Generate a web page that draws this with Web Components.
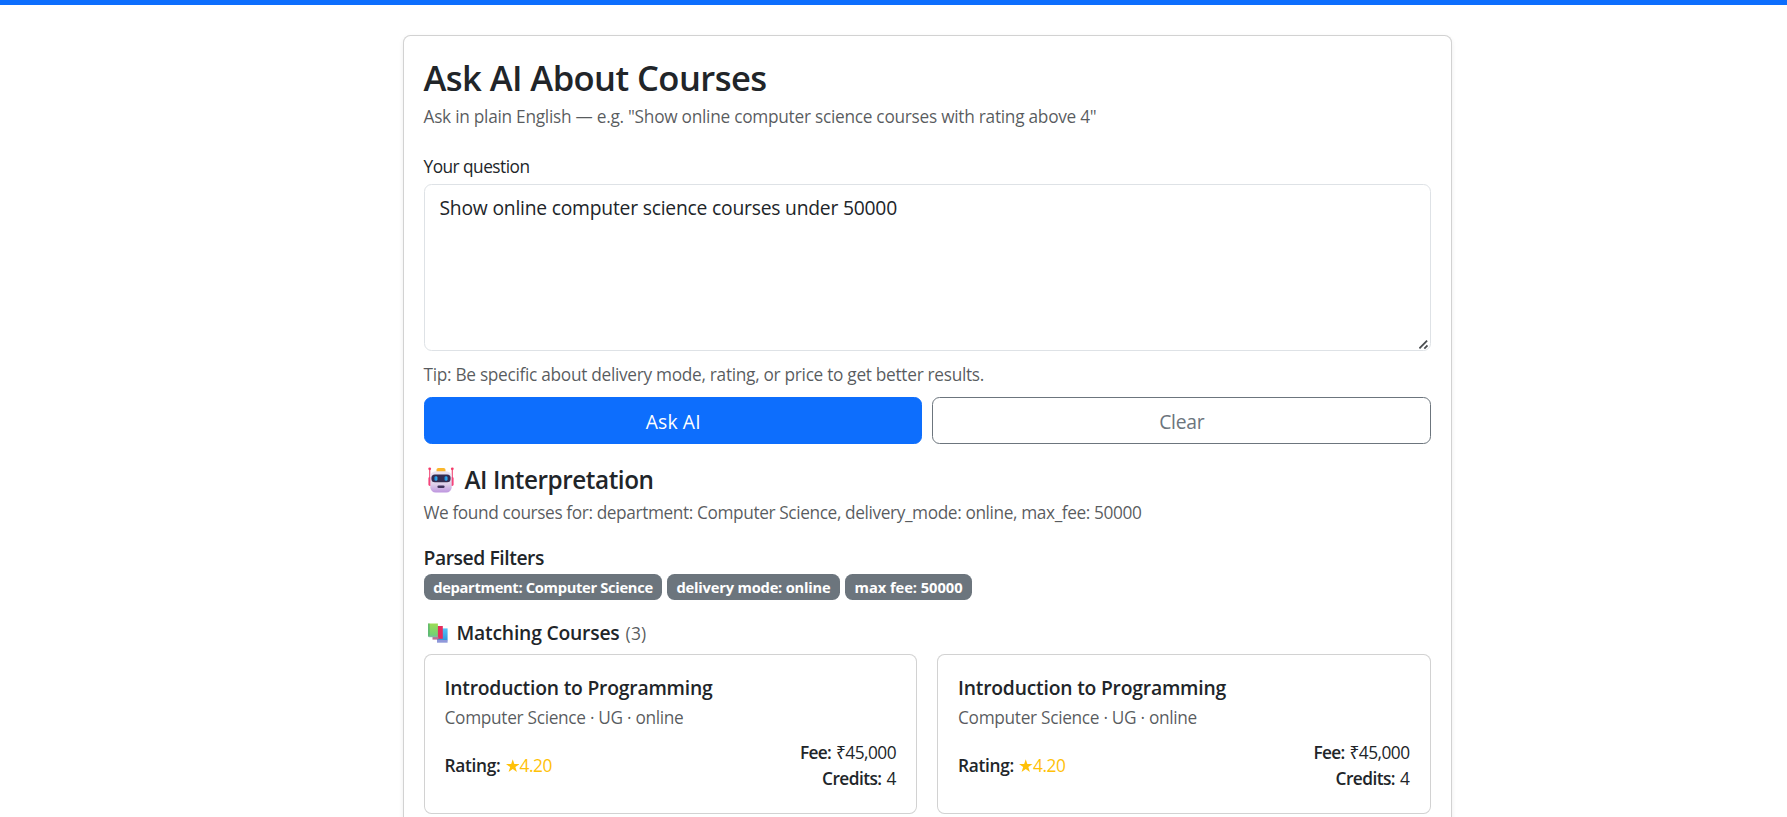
<!DOCTYPE html>
<html lang="en">
<head>
<meta charset="utf-8">
<title>Ask AI About Courses</title>
<style>
html, body { margin: 0; height: 100%; overflow: hidden; background: #fff; }
body { font-family: "Open Sans", "Noto Sans", sans-serif; font-size: 17.3px; color: #212529; }
</style>
</head>
<body>
<course-page></course-page>
<script>
const define = (name, html, ready) => {
  const tpl = document.createElement('template');
  tpl.innerHTML = html;
  customElements.define(name, class extends HTMLElement {
    connectedCallback() {
      if (this.shadowRoot) return;
      this.attachShadow({ mode: 'open' }).append(tpl.content.cloneNode(true));
      if (ready) ready.call(this, this.shadowRoot);
    }
  });
};

// Letter spacing that makes a line of text take the given width.
const spacingFor = (text, font, width) => {
  const ctx = document.createElement('canvas').getContext('2d');
  ctx.font = font;
  return (width - ctx.measureText(text).width) / text.length;
};

// A single line of text; "w" is its width in pixels.
define('text-line', `
<style>
:host { display: block; white-space: nowrap; flex: none; }
:host([muted]) { color: rgba(33,37,41,.75); }
</style><slot></slot>`, function () {
  const w = +this.getAttribute('w');
  if (!w) return;
  const cs = getComputedStyle(this);
  const ls = spacingFor(this.textContent, `${cs.fontWeight} ${cs.fontSize} ${cs.fontFamily}`, w);
  this.style.letterSpacing = ls.toFixed(3) + 'px';
  this.style.width = w + 'px';
});

define('robot-icon', `
<style>:host { display: block; width: 26px; height: 26px; flex: none; } svg { display: block; }</style>
<svg width="26" height="26" viewBox="0 0 26 26">
<defs>
<linearGradient id="f" x1="0" y1="0" x2="0" y2="1"><stop offset="0" stop-color="#ece5f1"/><stop offset=".6" stop-color="#e0d2ea"/><stop offset="1" stop-color="#bd94df"/></linearGradient>
<linearGradient id="e" x1="0" y1="0" x2="1" y2="0"><stop offset="0" stop-color="#1787d8"/><stop offset="1" stop-color="#35b5f5"/></linearGradient>
</defs>
<path d="M1.7 2v13M24.3 2v13" stroke="#f0527c" stroke-width="1.2"/>
<circle cx="1.7" cy="1.8" r="1.4" fill="#f43a68"/><circle cx="24.3" cy="1.8" r="1.4" fill="#f43a68"/>
<rect x=".4" y="10" width="3.4" height="9" rx="1.4" fill="#f5447b"/><rect x="22.2" y="10" width="3.4" height="9" rx="1.4" fill="#f5447b"/>
<rect x="8.5" y="1" width="9" height="5" rx="1.8" fill="#fbb72c"/>
<rect x="2.3" y="4.2" width="21.4" height="21.4" rx="5.4" fill="url(#f)"/>
<rect x="3.4" y="7.4" width="19.2" height="7.8" rx="3.5" fill="#342c50"/>
<rect x="6.4" y="9.3" width="3" height="4.4" rx="1.3" fill="url(#e)"/><rect x="16.5" y="9.3" width="3" height="4.4" rx="1.3" fill="url(#e)"/>
<rect x="9.4" y="18.4" width="7.2" height="2.7" rx="1.3" fill="#40335b"/>
</svg>`);

define('books-icon', `
<style>:host { display: block; width: 20px; height: 20px; flex: none; } svg { display: block; }</style>
<svg width="20" height="20" viewBox="0 0 20 20">
<defs>
<linearGradient id="g" x1="0" y1="0" x2="0" y2="1"><stop offset="0" stop-color="#9bdc55"/><stop offset="1" stop-color="#6fd078"/></linearGradient>
<linearGradient id="b" x1="0" y1="0" x2="0" y2="1"><stop offset="0" stop-color="#52c4f7"/><stop offset="1" stop-color="#3396dd"/></linearGradient>
</defs>
<path d="M9 5.4h10.6v12H9z" fill="url(#b)"/><path d="M9 17h10.6v2.7H9z" fill="#8f98da"/>
<path d="M5 3h9.8v12.8H5z" fill="#e52c5d"/><path d="M4.5 14h6v2.6h-6z" fill="#b77195"/>
<path d="M.3.5h9.6v12.7H.3z" fill="url(#g)"/><path d="M.3.5H1.4v13.2H.3z" fill="#42a866"/><path d="M.8 12.7h9.1v1.5H.8z" fill="#80bda0"/>
</svg>`);

define('question-field', `
<style>
:host { display: block; }
label { display: block; line-height: 27px; }
.box { position: relative; margin-top: 4px; }
textarea { display: block; box-sizing: border-box; width: 100%; height: 167px; margin: 0; padding: 8px 15px 6px; border: 1px solid #dee2e6; border-radius: 7.5px; background: #fff; color: inherit; font: 19.3px/30px "Open Sans", "Noto Sans", sans-serif; resize: none; outline: 0; }
.grip { position: absolute; right: 3px; bottom: 2px; width: 9px; height: 9px; }
text-line[muted] { margin-top: 10px; line-height: 27px; }
</style>
<label for="q"><text-line w="106">Your question</text-line></label>
<div class="box">
<textarea id="q">Show online computer science courses under 50000</textarea>
<svg class="grip" viewBox="0 0 9 9" fill="none" stroke="#4a4d50" stroke-width="1.8"><path d="M.4 8.4 8.1.7M5.3 8.6l3.2-3.2"/></svg>
</div>
<text-line muted w="560.5">Tip: Be specific about delivery mode, rating, or price to get better results.</text-line>
`, root => {
  const box = root.querySelector('textarea');
  box.style.letterSpacing = spacingFor(box.value, '19.3px "Open Sans"', 457.5).toFixed(3) + 'px';
});

define('action-button', `
<style>
:host { display: block; flex: 1; }
button { display: flex; justify-content: center; align-items: center; width: 100%; height: 47px; box-sizing: border-box; margin: 0; padding: 2px 0 0 1px; border: 1px solid #6c757d; border-radius: 7.5px; background: #fff; color: #6c757d; font: 19.3px/30px "Open Sans", "Noto Sans", sans-serif; }
:host([primary]) button { background: #0d6efd; border-color: #0d6efd; color: #fff; }
</style>
<button><slot></slot></button>`);

define('filter-badge', `
<style>
:host { display: flex; justify-content: center; box-sizing: border-box; height: 26px; padding-left: 1px; border-radius: 7.5px; background: #6c757d; color: #fff; font-size: 14.7px; font-weight: 700; line-height: 27px; }
</style><slot></slot>`);

define('course-card', `
<style>
:host { display: block; box-sizing: border-box; height: 160px; padding: 21px 20px; border: 1px solid rgba(0,0,0,.176); border-radius: 7.5px; background: #fff; }
.title { font-size: 19.3px; font-weight: 600; line-height: 24px; }
.sub { margin-top: 4px; line-height: 27px; }
.info { display: flex; justify-content: space-between; align-items: center; margin-top: 9px; line-height: 26px; }
.row { display: flex; justify-content: flex-end; }
.key { font-weight: 600; margin-right: 5px; }
.star { color: #ffc107; display: flex; align-items: center; }
svg { width: 13.5px; height: 13.5px; margin-right: .5px; }
</style>
<text-line class="title" w="268">Introduction to Programming</text-line>
<text-line class="sub" muted w="239">Computer Science · UG · online</text-line>
<div class="info">
<div class="row"><text-line class="key" w="56">Rating:</text-line><span class="star"><svg viewBox="0 0 12 12" fill="currentColor"><path d="M6 .2 7.4 4.5H12L8.3 7.2l1.4 4.4L6 8.9l-3.7 2.7 1.4-4.4L0 4.5h4.6z"/></svg><text-line w="32.5">4.20</text-line></span></div>
<div>
<div class="row"><text-line class="key" w="31">Fee:</text-line><text-line w="60">₹45,000</text-line></div>
<div class="row"><text-line class="key" w="59.5">Credits:</text-line><text-line w="9.5">4</text-line></div>
</div>
</div>`);

define('ask-panel', `
<style>
:host { display: block; box-sizing: border-box; width: 1049px; min-height: 1000px; padding: 20px; border: 1px solid rgba(0,0,0,.176); border-radius: 7.5px; background: #fff; box-shadow: 0 2.5px 5px rgba(0,0,0,.075); }
h1, h2, h3 { margin: 0; font-weight: 600; display: flex; align-items: center; }
h1 { font-size: 34.6px; line-height: 44px; font-weight: 550; }
h2 { font-weight: 550; }
.lead { margin-top: 3px; line-height: 27px; }
question-field { margin-top: 23px; }
.actions { display: flex; gap: 10px; margin-top: 9px; }
h2 { margin-top: 19px; height: 34px; font-size: 24.3px; line-height: 34px; padding-left: 4px; gap: 11px; }
.found { margin-top: 2px; line-height: 27px; }
h3 { font-size: 19.3px; line-height: 24px; }
.parsed { margin-top: 20px; }
.badges { display: flex; gap: 5px; margin-top: 4px; }
.matching { margin-top: 21px; padding-left: 4px; }
.matching books-icon { margin-right: 9px; }
.count { margin-left: 6px; font-size: 17.5px; font-weight: 400; }
.cards { display: grid; grid-template-columns: 1fr 1fr; gap: 20px; margin-top: 9px; }
</style>
<h1><text-line w="343">Ask AI About Courses</text-line></h1>
<text-line class="lead" muted w="673">Ask in plain English — e.g. "Show online computer science courses with rating above 4"</text-line>
<question-field></question-field>
<div class="actions">
<action-button primary><text-line w="55">Ask AI</text-line></action-button>
<action-button><text-line w="45">Clear</text-line></action-button>
</div>
<h2><robot-icon></robot-icon><text-line w="189">AI Interpretation</text-line></h2>
<text-line class="found" muted w="718">We found courses for: department: Computer Science, delivery_mode: online, max_fee: 50000</text-line>
<h3 class="parsed"><text-line w="120.5">Parsed Filters</text-line></h3>
<div class="badges">
<filter-badge style="width:238px"><text-line w="219.5">department: Computer Science</text-line></filter-badge>
<filter-badge style="width:173px"><text-line w="154">delivery mode: online</text-line></filter-badge>
<filter-badge style="width:127px"><text-line w="108">max fee: 50000</text-line></filter-badge>
</div>
<h3 class="matching"><books-icon></books-icon><text-line w="163">Matching Courses</text-line><text-line class="count" muted w="21">(3)</text-line></h3>
<div class="cards"><course-card></course-card><course-card></course-card></div>`);

define('course-page', `
<style>
:host { display: block; height: 817px; overflow: hidden; }
header { height: 5px; background: #0d6efd; }
main { padding: 30px 0 0 402.5px; }
</style>
<header></header>
<main><ask-panel></ask-panel></main>`);
</script>
</body>
</html>
